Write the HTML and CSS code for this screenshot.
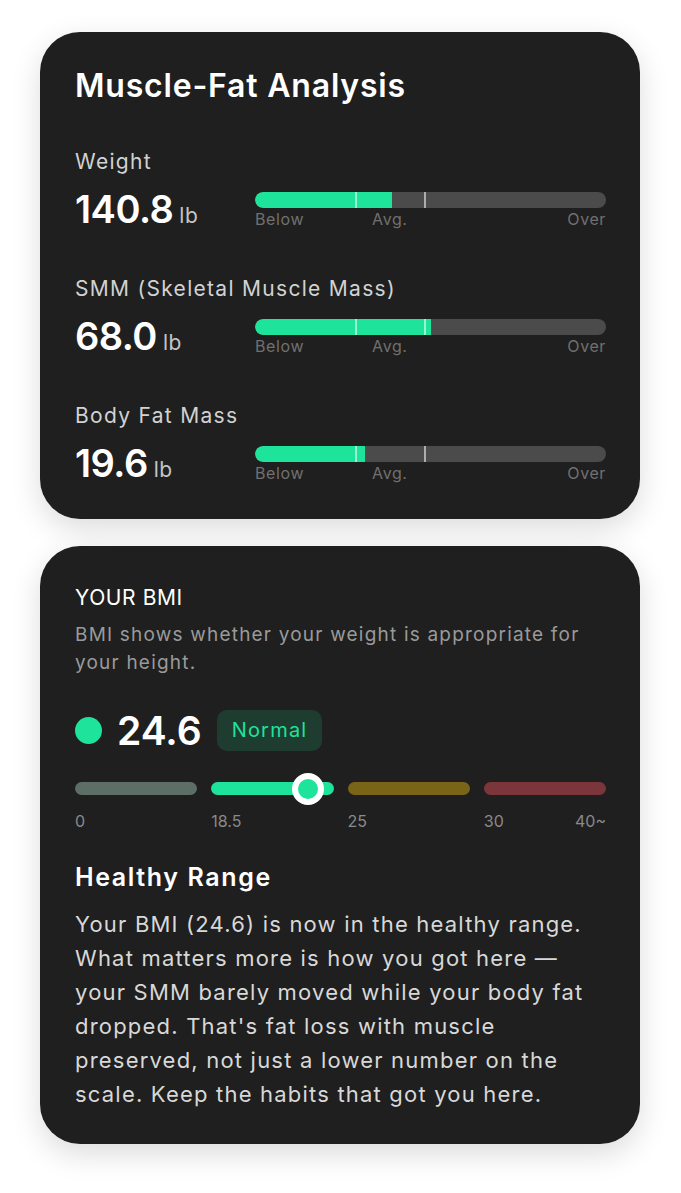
FILE: index.html
```html
<!DOCTYPE html>
<html lang="en">
<head>
  <meta charset="UTF-8">
  <meta name="viewport" content="width=device-width, initial-scale=1.0">
  <title>Muscle-Fat Analysis</title>
  <link rel="stylesheet" href="styles.css">
</head>
<body>
  <div class="page">
    <div class="card card-analysis">
      <h1 class="title">Muscle-Fat Analysis</h1>

      <div class="metric">
        <div class="metric-label">Weight</div>
        <div class="metric-row">
          <div class="metric-value">140.8<span class="unit">lb</span></div>
          <div class="meter">
            <div class="track">
              <div class="fill" style="width: 39%"></div>
              <span class="tick tick-a"></span>
              <span class="tick tick-b"></span>
            </div>
            <div class="meter-labels"><span>Below</span><span class="avg">Avg.</span><span class="over">Over</span></div>
          </div>
        </div>
      </div>

      <div class="metric">
        <div class="metric-label">SMM (Skeletal Muscle Mass)</div>
        <div class="metric-row">
          <div class="metric-value">68.0<span class="unit">lb</span></div>
          <div class="meter">
            <div class="track">
              <div class="fill" style="width: 50%"></div>
              <span class="tick tick-a"></span>
              <span class="tick tick-b"></span>
            </div>
            <div class="meter-labels"><span>Below</span><span class="avg">Avg.</span><span class="over">Over</span></div>
          </div>
        </div>
      </div>

      <div class="metric">
        <div class="metric-label">Body Fat Mass</div>
        <div class="metric-row">
          <div class="metric-value">19.6<span class="unit">lb</span></div>
          <div class="meter">
            <div class="track">
              <div class="fill" style="width: 31.3%"></div>
              <span class="tick tick-a"></span>
              <span class="tick tick-b"></span>
            </div>
            <div class="meter-labels"><span>Below</span><span class="avg">Avg.</span><span class="over">Over</span></div>
          </div>
        </div>
      </div>
    </div>

    <div class="card card-bmi">
      <h2 class="bmi-heading">YOUR BMI</h2>
      <p class="bmi-desc">BMI shows whether your weight is appropriate for your height.</p>

      <div class="bmi-row">
        <span class="bmi-dot"></span>
        <span class="bmi-value">24.6</span>
        <span class="badge">Normal</span>
      </div>

      <div class="scale">
        <div class="seg seg-under"></div>
        <div class="seg seg-normal">
          <span class="thumb" style="left: 79.5%"></span>
        </div>
        <div class="seg seg-over"></div>
        <div class="seg seg-obese"></div>
      </div>
      <div class="scale-labels">
        <span>0</span>
        <span>18.5</span>
        <span>25</span>
        <span class="last"><span>30</span><span>40~</span></span>
      </div>

      <h3 class="range-title">Healthy Range</h3>
      <p class="range-text">Your BMI (24.6) is now in the healthy range.<br>What matters more is how you got here —<br>your SMM barely moved while your body fat<br>dropped. That's fat loss with muscle<br>preserved, not just a lower number on the<br>scale. Keep the habits that got you here.</p>
    </div>
  </div>
</body>
</html>
```

FILE: styles.css
```css
body {
  margin: 0;
  background-color: #fff;
  font-family: "Inter", "Noto Sans", sans-serif;
}
.page {
  width: 600px;
  padding: 32px 40px 40px;
  display: flex;
  flex-direction: column;
  gap: 27px;
}
.card {
  background-color: #1f1f1f;
  border-radius: 40px;
  box-shadow: 0 10px 30px rgba(0, 0, 0, 0.14);
  color: #fff;
}

/* muscle-fat card */
.card-analysis {
  padding: 36px 34px 36px 35px;
  height: 415px;
}
.title {
  margin: 0 0 43px;
  font-size: 32px;
  line-height: 36px;
  font-weight: 600;
  letter-spacing: 0.8px;
}
.metric {
  height: 84px;
  margin-bottom: 43px;
}
.metric:last-child {
  margin-bottom: 0;
}
.metric-label {
  height: 30px;
  font-size: 21px;
  line-height: 30px;
  color: #d2d2d2;
  letter-spacing: 1.3px;
  margin-bottom: 12px;
}
.metric-row {
  display: flex;
  align-items: flex-start;
  height: 42px;
}
.metric-value {
  width: 180px;
  flex-shrink: 0;
  display: flex;
  align-items: baseline;
  font-size: 38px;
  line-height: 40px;
  font-weight: 600;
  letter-spacing: -0.5px;
}
.unit {
  font-size: 21px;
  line-height: 40px;
  font-weight: 400;
  color: #c4c4c4;
  margin-left: 6px;
  letter-spacing: 0.5px;
}
.meter {
  flex: 1;
  padding-top: 3px;
}
.track {
  position: relative;
  height: 16px;
  border-radius: 8px;
  background-color: #4b4b4b;
  overflow: hidden;
}
.fill {
  height: 100%;
  background-color: #1ee39b;
  border-radius: 8px 0 0 8px;
}
.tick {
  position: absolute;
  top: 0;
  width: 2px;
  height: 100%;
  background-color: rgba(255, 255, 255, 0.55);
}
.tick-a {
  left: 28.5%;
}
.tick-b {
  left: 48.2%;
}
.meter-labels {
  display: flex;
  font-size: 16px;
  line-height: 22px;
  color: #707070;
  letter-spacing: 0.6px;
}
.meter-labels .avg {
  margin-left: 68px;
}
.meter-labels .over {
  margin-left: auto;
}

/* bmi card */
.card-bmi {
  padding: 38px 34px 33px 35px;
}
.bmi-heading {
  margin: 0;
  font-size: 21px;
  line-height: 28px;
  font-weight: 400;
  letter-spacing: 0.6px;
}
.bmi-desc {
  margin: 9px 0 0;
  font-size: 19px;
  line-height: 28px;
  color: #9a9a9a;
  letter-spacing: 1.2px;
  width: 520px;
}
.bmi-row {
  display: flex;
  align-items: center;
  margin-top: 32px;
  height: 42px;
}
.bmi-dot {
  width: 27px;
  height: 27px;
  border-radius: 50%;
  background-color: #1ee39b;
  margin-right: 15px;
}
.bmi-value {
  font-size: 39px;
  font-weight: 600;
  margin-right: 15px;
}
.badge {
  display: flex;
  align-items: center;
  height: 41px;
  padding: 0 15px;
  border-radius: 10px;
  background-color: #1e3d30;
  color: #1ee39b;
  font-size: 20px;
  letter-spacing: 1.2px;
}
.scale {
  display: grid;
  grid-template-columns: repeat(4, 1fr);
  gap: 14px;
  margin-top: 31px;
}
.seg {
  position: relative;
  height: 13px;
  border-radius: 7px;
}
.seg-under {
  background-color: #5d6e66;
}
.seg-normal {
  background-color: #1ee39b;
}
.seg-over {
  background-color: #7a6418;
}
.seg-obese {
  background-color: #7b363b;
}
.thumb {
  position: absolute;
  top: 50%;
  width: 20px;
  height: 20px;
  margin: -16px 0 0 -16px;
  border: 6px solid #fff;
  border-radius: 50%;
  background-color: #1ee39b;
}
.scale-labels {
  display: grid;
  grid-template-columns: repeat(4, 1fr);
  gap: 14px;
  margin-top: 16px;
  font-size: 16px;
  line-height: 20px;
  color: #8a8a8a;
}
.scale-labels .last {
  display: flex;
  justify-content: space-between;
}
.range-title {
  margin: 30px 0 0;
  font-size: 25px;
  line-height: 32px;
  font-weight: 600;
  letter-spacing: 1.6px;
}
.range-text {
  margin: 14px 0 0;
  font-size: 22px;
  line-height: 34px;
  color: #d8d8d8;
  letter-spacing: 1.2px;
}
```
